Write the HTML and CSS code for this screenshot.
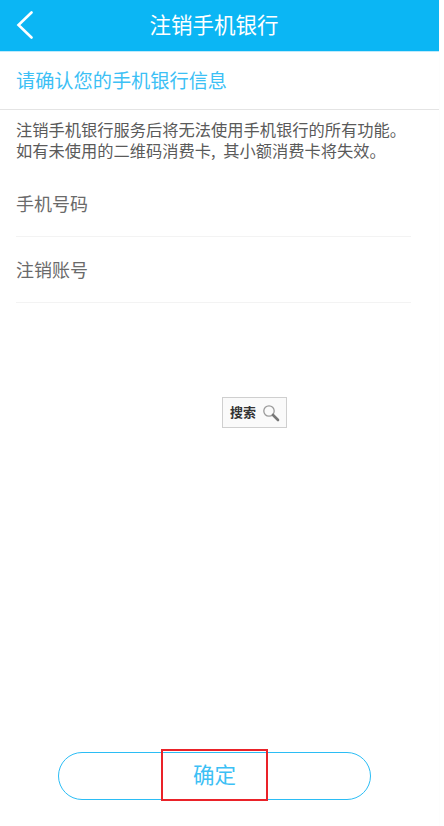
FILE: index.html
```html
<!DOCTYPE html>
<html lang="zh-CN">
<head>
<meta charset="utf-8">
<title>注销手机银行</title>
<link rel="stylesheet" href="styles.css">
</head>
<body>
<div class="app">
  <header class="topbar">
    <svg class="back" width="18" height="28" viewBox="0 0 18 28" aria-hidden="true"><path d="M15.5 1.5 L2.5 14 L15.5 26.5" fill="none" stroke="#fff" stroke-width="2.6" stroke-linecap="round" stroke-linejoin="miter"/></svg>
    <h1 class="title">注销手机银行</h1>
  </header>
  <h2 class="subhead">请确认您的手机银行信息</h2>
  <p class="notice">注销手机银行服务后将无法使用手机银行的所有功能。<br>如有未使用的二维码消费卡<span class="comma">, </span>其小额消费卡将失效。</p>
  <div class="rows">
    <div class="row">手机号码</div>
    <div class="row">注销账号</div>
  </div>
  <div class="spacer"></div>
  <div class="actions">
    <button class="confirm" type="button"><span class="confirm-label">确定</span><span class="mark"></span></button>
  </div>
</div>
<div class="search-pop">
  <span class="search-label">搜索</span>
  <svg width="18" height="18" viewBox="0 0 18 18" aria-hidden="true"><circle cx="7" cy="7" r="5.2" fill="#fafafa" stroke="#9a9a9a" stroke-width="1.3"/><path d="M11 11 L16 16" stroke="#777" stroke-width="2.6" stroke-linecap="round"/></svg>
</div>
</body>
</html>
```
FILE: styles.css
```css
* { box-sizing: border-box; }
html, body { margin: 0; padding: 0; background: #fff; }
body {
  width: 444px;
  height: 826px;
  overflow: hidden;
  position: relative;
  font-family: "Noto Sans CJK SC", "Noto Sans", sans-serif;
}
.app {
  width: 440px;
  height: 826px;
  display: flex;
  flex-direction: column;
  background: #fff;
  border-right: 1px solid #fdfdfd;
}
.topbar {
  height: 52px;
  flex: none;
  background: #0bb6f4;
  border-bottom: 1px solid #bfeafb;
  display: flex;
  align-items: center;
  justify-content: center;
  position: relative;
  padding-right: 11px;
}
.back { position: absolute; left: 16px; top: 11px; }
.title {
  margin: 0 0 4px;
  font-size: 21.5px;
  font-weight: 400;
  line-height: 30px;
  color: #fff;
}
.subhead {
  margin: 0;
  height: 58px;
  flex: none;
  padding: 0 0 2px 16px;
  display: flex;
  align-items: center;
  font-size: 19.2px;
  font-weight: 400;
  color: #3cc0f5;
  border-bottom: 1px solid #e4e4e4;
}
.notice {
  margin: 0;
  padding: 9px 0 0 16px;
  flex: none;
  height: 61px;
  font-size: 16.25px;
  line-height: 21px;
  color: #5a5a5a;
  white-space: nowrap;
}
.comma { letter-spacing: 2px; }
.rows { flex: none; padding: 0 28px 0 16px; }
.row {
  height: 66px;
  display: flex;
  align-items: center;
  padding-bottom: 2px;
  font-size: 18px;
  color: #6a6a6a;
  border-bottom: 1px solid #f3f3f3;
}
.spacer { flex: 1; }
.actions { flex: none; padding: 0 0 26px 58px; }
.confirm {
  display: block;
  position: relative;
  width: 313px;
  height: 48px;
  padding: 0 0 6px;
  background: #fff;
  border: 1.5px solid #2bbdf5;
  border-radius: 24px;
  font-family: inherit;
  font-size: 21.5px;
  color: #3cc0f5;
}
.mark {
  position: absolute;
  left: 102px;
  top: -4px;
  width: 107px;
  height: 52px;
  border: 2px solid #ea2229;
}
.search-pop {
  position: absolute;
  left: 222px;
  top: 397px;
  width: 65px;
  height: 31px;
  display: flex;
  align-items: center;
  gap: 6px;
  padding-left: 7px;
  background: #fafafa;
  border: 1px solid #cfcfcf;
  font-size: 13px;
  font-weight: 700;
  color: #333;
}
.search-label { margin-bottom: 3px; }
```
